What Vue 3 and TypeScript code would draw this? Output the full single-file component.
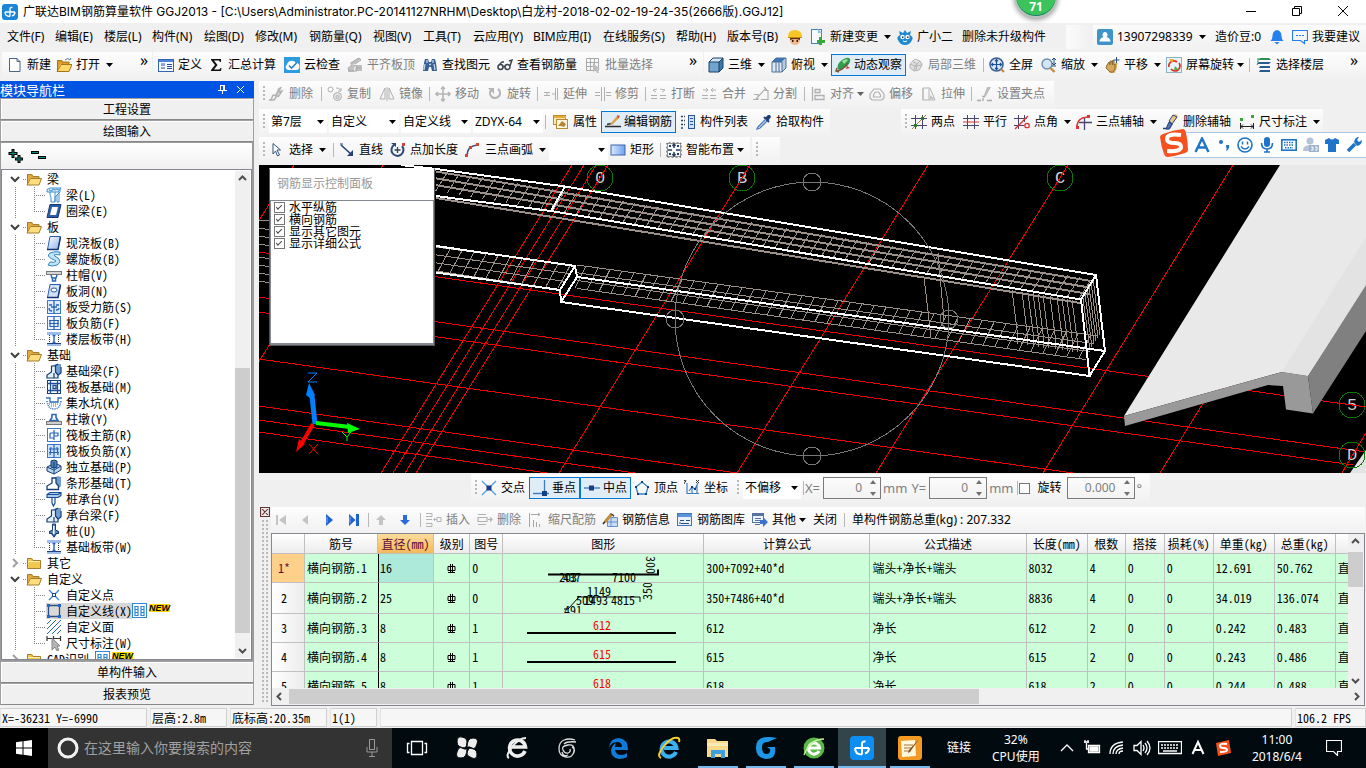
<script setup lang="ts">
import { h, ref, type FunctionalComponent } from 'vue'

interface Item {
  k?: 'sep' | 'grip' | 'combo' | 'more' | 'gap'
  t?: string
  i?: string
  w: number
  a?: 1 | 2
  d?: boolean
  on?: boolean
}

const G = '#a9a9a9'
const B = '#2563b8'
const N = '#1d3f7a'
const ln = (d: string, c: string, w = 1) => `<path d="${d}" fill="none" stroke="${c}" stroke-width="${w}"/>`
const fl = (d: string, c: string) => `<path d="${d}" fill="${c}"/>`
const grid = (x: number, y: number, w: number, hh: number, f: string, c: string) =>
  `<rect x="${x}" y="${y}" width="${w}" height="${hh}" fill="${f}" stroke="${c}"/>`

const icons: Record<string, string> = {
  logo: `<rect width="16" height="16" rx="3" fill="#1a86d9"/>` + ln('M3 8h10M8 12.5V5q0-2 2.5-1.5M3 8q0 4.5 5 4.5M13 8q0 3-3 4', '#fff', 1.3),
  file: fl('M3 1h7l3 3v11H3z', '#fff') + ln('M3 1.5h7l3 3v10H2.5v-13zM10 1.5v3h3', '#4a6486'),
  open: fl('M1 3h5l1 2h6v3H5l-3 6H1z', '#d99d2b') + fl('M1 14l3-7h12l-3 7z', '#ffd868') + ln('M1.5 14V3.5h4l1 1.5H13v2M1 14.5h12l3-7H5z', '#a8741b') + ln('M9 3q3-3 5 0l1-2', '#4a7d9e'),
  define: grid(.5, 2.5, 15, 12, '#f4f8ff', '#3764b0') + fl('M1 3h14v2H1z', '#4d82d6') + ln('M3 8h4M3 11h4M9 7.5h5M9 9.5h5M9 11.5h5', '#2a4f94') + ln('M3 6.5h4', '#8fb2e8'),
  sigma: fl('M3 2h10v3h-1l-1-1.5H6L9.5 8 6 12.5h5.5L12.5 11h1L13 14H3v-1l4-5-4-5z', '#111'),
  cloud: `<rect width="16" height="16" fill="#2d9be0"/>` + fl('M4 13a3 3 0 0 1-1-5.5A5 5 0 0 1 12 6a3.5 3.5 0 0 1 0 7z', '#fff') + ln('M5 8.5l2.5 2.5 5-5', '#2d7fc8', 1.6),
  level: fl('M1 12l3-3h4l-1 3v3H1zM9 8h6v6H8zM3 6l8-5 3 1-6 5-4 1z', '#c0c0c0') + ln('M1 11l4-3 5 1v5H2zM4 6l8-5 2 2-6 4M9 11h5', G),
  binoc: fl('M2 6l1-4h3l1 3h2l1-3h3l1 4 1 8h-5l-1-4H7l-1 4H1z', '#3a5f96') + ln('M3 7l-1 6M5 3v3M11 3v3M12 7l1 6M7 7.5h2', '#c3d5ec', 1.3),
  glasses: ln('M1 10a2.5 2.5 0 1 0 5 0a2.5 2.5 0 1 0-5 0M8 10a2.5 2.5 0 1 0 5 0a2.5 2.5 0 1 0-5 0M6 9.5h2M2 8l3-3h2M13 9l2-6-3 1', '#3b4550', 1.5),
  batch: ln('M1.5 1.5h12v12h-12zM1.5 5.5h12M1.5 9.5h8M5.5 1.5v12M9.5 1.5v8', G) + fl('M8 6l7 6h-3l2 4h-2l-1.5-3L8 15z', '#bdbdbd'),
  cube: fl('M1 5l4-4h10l-4 4z', '#cfe6f7') + fl('M1 5h10v10H1z', '#6ea6cf') + fl('M11 5l4-4v10l-4 4z', '#3e78a8') + ln('M1 5l4-4h10v10l-4 4H1zM1 5h10v10M11 5l4-4', '#1e3f60'),
  topview: fl('M1 5l4-4h10l-4 4z', '#3c78b8') + fl('M1 5h10v10H1z', '#dfe9f3') + fl('M11 5l4-4v10l-4 4z', '#b6cbe0') + ln('M1 5l4-4h10v10l-4 4H1zM1 5h10v10M5 5v10M8 5v10', '#4d7194'),
  orbit: fl('M3 12Q1 8 7 3q6-4 8-1 1 4-4 8-6 4-8 2z', '#2f9d4d') + ln('M1 14Q7 14 13 6M4 15l-3-1 1-3', '#7a5838', 1.5) + fl('M7 4q4-3 6-1l-4 4z', '#9be09d') + fl('M12 9l3 2-4 1z', '#d23b2a'),
  local: fl('M2 7l5-4 5 1 3 3-3 6-6 1-4-2z', '#e0e0e0') + ln('M2 7l5-5 5 2 2 4-3 5-5 1-4-3zM2 7l5 2 5-5M7 9l-1 5M7 9l7-1M4 4l5 3-1 7', '#b5b5b5'),
  full: `<circle cx="7.5" cy="7.5" r="6.5" fill="#d8e8f8" stroke="#3b5f8c" stroke-width="1.5"/>` + ln('M7.5 2.5v10M2.5 7.5h10M6 4l1.5-1.5L9 4M6 11l1.5 1.5L9 11M4 6L2.5 7.5 4 9M11 6l1.5 1.5L11 9', '#1d4f97', 1.2) + ln('M12 12l3 3', '#c58a3a', 2.2),
  zoom: `<circle cx="6" cy="7" r="5" fill="#d4e6f6" stroke="#6d8cab" stroke-width="1.4"/>` + ln('M9.5 11l4 4', '#c58a3a', 2.4) + ln('M13 1v6M11 3l2-2 2 2M11 9h4M11 6l2 2 2-2', '#1c4a84'),
  pan: fl('M3 8l2-3 1 3V4h1.5l1 4V3.5H10V8l2-3 1.5 1-1 6-2 4H6l-3-4z', '#d6a957') + ln('M3 8l2-3 1 3V4h1.5l1 4V3.5H10V8l1-1v5l-2 3H6l-4-4z', '#8a6a34') + ln('M12.5 0v6M9.5 3h6', '#28527f'),
  rotscr: grid(.5, .5, 15, 15, '#e6f4f7', '#8ab4c4') + ln('M3 10a5 5 0 0 1 8-5M13 6a5 5 0 0 1-8 6', '#d8342c', 1.7) + fl('M3 2h5l-2 4z', '#f6a829') + fl('M9 9l4 4H8z', '#5cad49'),
  floors: fl('M4 1h9l2 2H2z', '#2f8d56') + fl('M3 5h12l-2 2H1zM4 9h10v2H3zM4 13h10v2H3z', '#295b92') + ln('M2 1v5l-1 2', '#2f8d56'),
  erase: fl('M9 2l4-1-4 8-3 1z', '#c3c3c3') + ln('M0 14h4M4 9l4 1-3 4H2l2-5M12 1L7 9M10 6l3-1-4 6', '#b0b0b0', 1.4),
  copy: `<circle cx="3.5" cy="3.5" r="2.5" fill="none" stroke="#b0b0b0"/><circle cx="10.5" cy="10.5" r="4" fill="#e4e4e4" stroke="#b0b0b0"/><circle cx="10.5" cy="11" r="1.5" fill="none" stroke="#b0b0b0"/>` + ln('M9 2q3-1 5 3M14 2v3h-3', '#b0b0b0'),
  mirror: ln('M6 2v11H1zM10 2v11h5zM8 1v14', '#b0b0b0'),
  move: ln('M8 1v14M1 8h14M6 3l2-2 2 2M6 13l2 2 2-2M3 6L1 8l2 2M13 6l2 2-2 2', '#b5b5b5', 1.6),
  rot: ln('M4 4a5 5 0 1 0 7-1', '#b5b5b5', 2.2) + fl('M1 2h6v6z', '#b5b5b5'),
  extend: ln('M1 6.5h6M1 9.5h6M9 8h3M12.5 2v12M14.5 2v12M4 6v4', '#b0b0b0'),
  trim: ln('M6.5 1v14M9.5 1v14M0 6.5h5M0 9.5h5M11 6.5h5M11 9.5h5', '#b0b0b0'),
  brk: ln('M0 12.5h6M0 9.5h6M9 12.5h6M9 9.5h6M6 3L2 4l3 2M9 3l5 1-3 2', '#b0b0b0'),
  merge: ln('M0 12.5h6M0 9.5h6M8 12.5h6M8 9.5h6M1 4h5M4 2l2 2-2 2M14 4H9M11 2L9 4l2 2', '#b0b0b0'),
  split: ln('M0 13.5h5v-5h-4M8 13.5h7v-9h-3M3 13L13 2M11 1l3 3', '#b0b0b0', 1.2),
  align: ln('M2.5 1v14M5 3.5h5v3H5zM5 9.5h9v4H5z', '#b0b0b0', 1.3),
  offset: ln('M5 3h6l4 5v4l-2 2H3l-2-2V8zM6.5 6h3l2 3v2h-7V9z', '#b0b0b0', 1.2),
  stretch: ln('M2 2h7l5 12H2zM2 2v12M8 3v11', '#b5b5b5') + fl('M9 9l5 4h-5z', '#c4c4c4'),
  grips: fl('M10 1h4l-5 9-3 2z', '#bdbdbd') + ln('M0 14.5h4M10 14.5h5M5 10l3 1M6 12v3', '#a8a8a8', 1.3),
  prop: grid(.5, 1.5, 12, 9, '#fbe9b7', '#b98a31') + fl('M1 2h12v2H1z', '#e9ab37') + grid(3.5, 5.5, 11, 9, '#fff6dd', '#b98a31') + fl('M5 12l4-5 4 3-2 3-3-1z', '#b48738'),
  editbar: ln('M0 12.5h16M2 10.5l4-1', '#2d2d2d', 1.6) + fl('M5 10l7-8 2 2-7 7z', '#d8a24e') + fl('M12 1l3 1-2 3z', '#c44936'),
  list: ln('M1 2.5h2M1 6.5h2M1 10.5h2M1 14h2M4 2.5h1M4 6.5h1M4 10.5h1', '#345', 1.5) + grid(8.5, 1.5, 6, 13, '#cfe0f7', '#29549b') + ln('M10 4.5h3M10 7.5h3M10 10.5h3', '#29549b'),
  pick: fl('M9 4l3-3h2l1 2-3 4z', '#1f3d73') + ln('M8 3l5 5', '#1f3d73', 2) + ln('M10 5l-8 8-1 2 3-1 7-7', '#4c7cb8', 1.3),
  twop: ln('M4.5 1v14M11.5 1v14M0 4.5h16M0 11.5h16', '#46466e') + ln('M1 15L15 1', '#a5802e') + fl('M3 10h3v3H3zM10 3h3v3h-3z', '#2f7a2f'),
  para: ln('M4.5 1v14M11.5 1v14', '#46466e') + ln('M0 4.5h16M0 11.5h16', '#46466e') + ln('M0 8h16', '#d33'),
  pang: ln('M4.5 1v14M10.5 1v7M0 4.5h13M0 11.5h10', '#46466e') + ln('M1 15L14 2', '#d33', 1.3) + `<circle cx="13" cy="11.5" r="2.2" fill="none" stroke="#d33" stroke-width="1.3"/>`,
  parc: ln('M1 13q0-10 12-10', '#d33', 1.6) + ln('M8.5 4v12M3 8.5h13', '#46466e', 1.3) + fl('M11 1h3v3h-3zM0 12h3v3H0z', '#d33'),
  delax: ln('M0 14.5h7', '#28427c', 1.5) + fl('M10 1l3-1 2 2-5 7-3-2z', '#e6c77c') + fl('M7 7l3 3-3 5H3l2-5z', '#5572ad') + ln('M10 1l4 2-5 7-3-3zM6 8l3 2-3 5H3z', '#28427c'),
  dim: fl('M1 4h3v3H1zM12 1h3v3h-3z', '#3ba53b') + ln('M1.5 9v6M14.5 9v6M2 12.5h12M4 10.5l-2 2 2 2M12 10.5l2 2-2 2', '#222'),
  cursor: fl('M4 1l8 7H8.5l2 5-2 1-2-5L4 12z', '#fff') + ln('M4 1.5l7.5 6.5H8l2.5 5-2 1-2-5L4 12z', '#33527d'),
  line: ln('M2 3l11 10', '#24417a', 1.6) + fl('M14 8v6H8z', '#24417a') + ln('M1 2h3', '#24417a'),
  addlen: ln('M4 3a6 6 0 1 0 8 1', '#2c4877', 2) + ln('M7.5 5v6M4.5 8h6', '#345', 1.3) + fl('M1 1h5v4z', '#2c4877') + fl('M12 1h3v3h-3z', '#c44'),
  arc: ln('M2 14Q2 4 12 3', '#35507e', 1.6) + fl('M0 12h3v3H0zM4 4h3v3H4zM11 1h3v3h-3z', '#d2452f'),
  rect: `<defs><linearGradient id="rg"><stop stop-color="#dce9ff"/><stop offset="1" stop-color="#6fa0f0"/></linearGradient></defs><rect x="1" y="3" width="14" height="10" fill="url(#rg)" stroke="#3d63ae"/>`,
  smart: ln('M1 1h14v14H1z', '#333') + `<path d="M.5.5h15v15H.5z" fill="none" stroke="#fff" stroke-dasharray="2 2"/>` + ln('M8 2v4M8 10v4M2 8h4M10 8h4M6.5 4L8 2l1.5 2M6.5 12L8 14l1.5-2', '#24415f', 1.4) + fl('M3 3h2v2H3zM11 3h2v2h-2zM3 11h2v2H3zM11 11h2v2h-2z', '#24415f'),
  worker: fl('M3 8h10v4q-1 4-5 4t-5-4z', '#f0b98c') + fl('M1 8Q1 1 8 1t7 7l-2 1H3z', '#f6c626') + fl('M3 9h10v2q-5-2-10 0z', '#5c3415') + fl('M5 11h1.5v2H5zM9.5 11H11v2H9.5z', '#331a0a') + ln('M1 8.5h14', '#c08b13'),
  newchg: grid(1.5, .5, 10, 14, '#f5fbff', '#3b87bd') + fl('M8 0l4 4H8z', '#8cc2e6') + fl('M9 8h3v3h3v3h-3v2H9v-2H7v-3h2z', '#36a83a'),
  fairy: fl('M2 2l4 2 2-3 2 3 4-2-1 4q4 2 2 5-2 5-7 5t-7-5q-2-3 2-5z', '#1e88d2') + `<circle cx="5.5" cy="8" r="2.2" fill="#fff"/><circle cx="10.5" cy="8" r="2.2" fill="#fff"/>` + fl('M5 7.5h1.5V9H5zM10 7.5h1.5V9H10z', '#234') + ln('M6 12q2 1.5 4 0', '#fff'),
  user: `<rect width="16" height="16" rx="2" fill="#3e93c9"/>` + fl('M8 3a2.8 2.8 0 0 1 1.5 5q4 1 4 4.5h-11q0-3.5 4-4.5A2.8 2.8 0 0 1 8 3z', '#fff'),
  bell: fl('M8 1q4.5 1 4.5 6 0 3 2 5h-13q2-2 2-5 0-5 4.5-6zM5.5 13h5L8 15.5z', '#2680eb'),
  chat: ln('M.5 1.5h15v10h-3v3l-4-3h-8z', '#2680eb', 1.2) + fl('M4 6h2v1H4zM7 6h2v1H7zM10 6h2v1h-2z', '#2680eb'),
  cross: ln('M1 1l14 14M15 1L1 15', '#4da0df', 1.3) + fl('M5.5 5.5h5v5h-5z', '#153f86'),
  perp: ln('M0 13.5h16M11.5 0v15', '#3c7fc6', 1.3) + fl('M9 11h5v5H9z', '#153f86'),
  mid: ln('M0 8h16', '#3c7fc6', 1.4) + fl('M5 5.5h5v5H5z', '#153f86'),
  vertex: ln('M8 2l6 5-2 7H4L2 7z', '#3a80c4', 1.3) + fl('M7 1h2v2H7zM13 6h2v2h-2zM1 6h2v2H1zM3 13h2v2H3zM11 13h2v2h-2z', '#153f86'),
  coord: ln('M3 3v10.5h12M5 11l3-4 3 2 3-6M8 14V8M13 14V5', '#3c7fc6', 1.2) + ln('M0 0l2 2M2 0L0 4M12 0l3 3M15 0l-3 3', '#333') + fl('M7 6h2v2H7zM10 8h2v2h-2z', '#153f86'),
  first: fl('M1 3h2v10H1zM11 3v10L4 8z', '#c4c4c4'),
  prev: fl('M10 3v10L4 8z', '#c4c4c4'),
  next: fl('M4 2l7 6-7 6z', '#1e62d2') + ln('M5 5v6', '#7db0f5'),
  last: fl('M3 2l6.5 6L3 14zM10 2h3v12h-3z', '#1e62d2') + ln('M4 5v6', '#7db0f5'),
  up: fl('M8 3l5 5h-3v5H6V8H3z', '#c4c4c4'),
  down: fl('M6 3h4v5h3l-5 5-5-5h3z', '#2a6ce0'),
  ins: ln('M0 1.5h6v3H0M0 7.5h6M0 11.5h6v3H0M15 5.5v4h-4v-4zM8 7.5h3M9 6L7.5 7.5 9 9', '#b3b3b3'),
  rem: ln('M1 2.5h8M1 5.5h9v4H1zM1 12.5h8M11 7.5h4M13 5.5l2 2-2 2', '#b3b3b3', 1.2),
  scale: ln('M1.5 1v14M5.5 8v7M8.5 10v5M11.5 12v3M3 2.5h9M10 1l2 1.5L10 4', '#a8a8a8'),
  info: fl('M5 5h10v9H5z', '#c9dcf5') + ln('M5.5 5.5h10v9h-10zM9 6v8M5.5 10h10', '#6790c9') + ln('M1 12L9 2l3 2', '#3a2d20', 1.6) + fl('M2 9l6-7 3 1-7 8z', '#c78e3b'),
  lib: grid(.5, 1.5, 14, 12, '#e9f1fb', '#4175b8') + fl('M1 2h14v3H1z', '#5b93d8') + ln('M3 8.5h4M9 8.5h4M4 11.5h8M3 10v2', '#284b7d'),
  other: grid(.5, 1.5, 11, 9, '#eef3fb', '#5574a3') + fl('M1 2h11v2H1z', '#5574a3') + ln('M3 6.5h6M3 8.5h6M3 12.5h5', '#5574a3') + fl('M8 8h3V5l5 5-5 5v-3H8z', '#3b72cf'),
  // component tree
  fopen: fl('M1 3h5l1.5 2H13v3H5l-3 6H1z', '#e0a93a') + fl('M1 14l3-7h12l-3 7z', '#ffdd7a') + ln('M1.5 13.5V3.5h4l1.5 2h6v1.5M1 14h12l2.5-6.5h-11z', '#a57d33'),
  fclosed: fl('M1 3h5l1.5 2H15v9H1z', '#f3c650') + ln('M1.5 13.5V3.5h4l1.5 2h7.5v8z', '#a57d33') + ln('M2 6.5h12', '#fff0b0'),
  beam: fl('M1 3l3-2h11l-4 4H1z', '#d9edfa') + ln('M1 2.5l3-1.5h11l-3 4H1zM4 5v3l1 2v5h4v-5l3-3 2-2v-3M9 5v10M11 8v7h2V5M3 3l4 1M6 2l4 1M10 2l3 1', '#3f8fca'),
  ring: fl('M4 1h11l-3 14H1z', '#2c5ea8') + fl('M6 4h6l-2 8H4z', '#fff') + ln('M4 1.5h11L12 14.5H1z', '#16366f'),
  slab: `<defs><linearGradient id="sg" x2="1" y2="1"><stop stop-color="#fff"/><stop offset="1" stop-color="#8db2ea"/></linearGradient></defs><path d="M4 1.5h10.5L12 14.5H1.5z" fill="url(#sg)" stroke="#2c5ea8"/>` + ln('M1 14.5h11L14.5 2', '#16366f', 1.4),
  spiral: fl('M4 2q5-2 10-1v3q-4-1-6 0 0 1 4 3 4 4-1 7-5 2-9 0l2-3q5 1 6-1-1-1-4-2-6-3-2-6z', '#bfe4f8') + ln('M4 2q5-2 10-1v3q-4-1-6 0 0 1 4 3 4 4-1 7-5 2-9 0l2-3q5 1 6-1-1-1-4-2-6-3-2-6z', '#2f86c5'),
  cap: grid(.5, 4.5, 15, 3, '#d5d5d5', '#777') + ln('M5 8l1 3h4l1-3M6.5 11v3h3v-3', '#2c67bd', 1.5),
  hole: `<path d="M4 1.5h10.5L12 14.5H1.5z" fill="#cfe0f8" stroke="#2c5ea8"/><ellipse cx="8" cy="7" rx="3" ry="2" fill="#fff" stroke="#2c5ea8"/>` + ln('M1 14.5h11L14.5 2', '#16366f', 1.4),
  r1: grid(1.5, 1.5, 13, 13, '#dcebff', '#4076c9') + ln('M8 1v14M3 6h3M10 6h3M3 9q0 3 3 3M13 9q0 2-3 2M5 8h6', B, 1.3),
  r2: grid(1.5, 1.5, 13, 13, '#eef5ff', '#4076c9') + ln('M8 1v14M3 5.5h10M3 8.5h10M4 11.5h8M4 5v7M12 5v7', B, 1.2),
  band: fl('M1 1h14v3H1zM1 12h14v3H1z', '#9cbced') + ln('M1 12.5h14', N) + `<path d="M3.5 4v8M12.5 4v8" stroke="#333" stroke-dasharray="1 1"/>` + ln('M8 4v8M6.5 4.5h3M6.5 11.5h3', B, 1.4),
  fbeam: fl('M6 3l4-2h5v9l-4 4z', '#6f9fce') + fl('M5 3h4v6l3 3v3H1v-3l4-3z', '#e5f0fa') + ln('M5.5 3h4v6l2.5 3v3H1v-3l4.5-3zM9 3l3-2M12 12l3-2V4M8 10v5', '#173d75', 1.2),
  raft: grid(1.5, 1.5, 13, 13, '#fff', '#173d75') + ln('M4.5 1v14M11.5 1v14M1 4.5h14M1 11.5h14M7 6.5h3v3H7z', '#1c4f97', 1.3),
  pit: ln('M0 3h4v4h8V3h4', '#2f6db8', 1.3) + `<path d="M1 6q1 8 7 8t7-8" fill="none" stroke="#2f6db8" stroke-width="1.5" stroke-dasharray="1 1"/><path d="M3 9h10M5 11h6" stroke="#2f6db8" stroke-dasharray="1 1"/>`,
  pier: ln('M6 3.5h4v3l2 3H4l2-3z', '#2c67bd', 1.6) + grid(.5, 10.5, 15, 3, '#cfcfcf', '#777'),
  r3: grid(1.5, 1.5, 13, 13, '#fff', '#4076c9') + ln('M8 3v10M4 6h4v-1M8 9h4M4 6v5h4M12 9v-3H8', B, 1.2),
  r4: grid(1.5, 1.5, 13, 13, '#cfe3ff', '#4076c9') + ln('M8 1v14M3 6h10M3 9.5h10M5 4l-1 8M11 4l1 8', B, 1.2),
  iso: fl('M1 8l6-4 8 3v4l-7 4-7-3z', '#b9d5ee') + fl('M5 2l3-1 3 1v6L8 10 5 8z', '#4b80b8') + ln('M1 8l4-2M11 5l4 2v4l-7 4-7-3V8l7 3 7-4M8 11v4M5 2l3-1 3 1v6L8 9 5 8zM8 3v6', '#173d75'),
  strip: fl('M8 3l4-2 3 1v9l-3 3z', '#6f9fce') + fl('M6 3h4v5l2 3v3H1v-3l4-3z', '#fff') + ln('M6 3h4v5l2.5 3v3.5H1V11l5-3z', '#173d75', 1.3),
  pilecap: fl('M1 3l3-2h11v4l-3 2H1z', '#a9c9e8') + ln('M1 3.5l3-2h11v3l-3 2H1zM1 3.5h11l3-2M6 7v5l1.5 3L9 12V7', '#1c4f97', 1.2),
  pile: fl('M6 1h4v6l3 1v3h-2l-3 4-3-4H3V8l3-1z', '#5b87b5') + ln('M6.5 1h3v6l3 1.5v2H10l-2 3.5-2-3.5H3.5v-2l3-1.5z', '#173d75') + fl('M7 3h1.5v8H7z', '#fff'),
  xpt: ln('M3 3l10 10M13 3L3 13', '#3d86cf', 1.3) + fl('M6 6h4v4H6z', '#1a4690') + fl('M7 7h2v2H7z', '#fff'),
  polyl: ln('M2.5 2.5h11v11h-11z', '#2c4c84', 1.3) + fl('M1 1h3v3H1zM12 1h3v3h-3zM1 12h3v3H1zM12 12h3v3h-3z', '#2368c8'),
  hatch: ln('M1 5l4-4M1 10L10 1M1 15L15 1M6 15l9-9M11 15l4-4', '#2368c8'),
  dimt: ln('M1 1v5M14.5 1v5M1 3.5h13M7.5 1v5', '#333', 1.2) + fl('M6 3l8 8h-3l2 4-2 1-2-4-3 3z', '#b5b5b5') + ln('M6 3l8 8h-3l2 4-2 1-2-4-3 3z', '#8b8b8b'),
  gridb: grid(.5, .5, 14, 14, '#fff', '#2f87d6') + ln('M3 3.5h3v9H3zM9 3.5h3v9H9zM3 6.5h3M3 9.5h3M9 6.5h3M9 9.5h3', '#2f87d6', 1.2),
}

const Icon: FunctionalComponent<{ n: string }> = (p) => h('svg', { class: 'ico', viewBox: '0 0 16 16', 'aria-hidden': 'true', innerHTML: icons[p.n] })
Icon.props = ['n']

const caret = () => h('svg', { viewBox: '0 0 7 4', innerHTML: '<path d="M0 0h7L3.5 4z"/>' })

const Tools: FunctionalComponent<{ items: Item[] }> = (p) =>
  p.items.map((it) => {
    const style = { width: it.w + 'px' }
    if (it.k === 'gap') return h('span', { style })
    if (it.k === 'sep') return h('span', { class: 'sep', style })
    if (it.k === 'grip') return h('span', { class: 'grip', style })
    if (it.k === 'more') return h('button', { class: 'more', style, 'aria-label': '更多' }, '»')
    if (it.k === 'combo')
      return h('span', { class: 'combo', style }, [h('select', { 'aria-label': it.t || '选项' }, [h('option', it.t)]), caret()])
    return h('button', { class: ['tool', { off: it.d, on: it.on }], style, disabled: it.d }, [
      it.i ? h(Icon, { n: it.i }) : null,
      it.t ? h('span', it.t) : null,
      it.a ? h('i', { class: it.a === 2 ? 'car tight' : 'car' }, [caret()]) : null,
    ])
  })
Tools.props = ['items']

const menus: [string, number][] = [['文件(F)', 48], ['编辑(E)', 49], ['楼层(L)', 48], ['构件(N)', 52], ['绘图(D)', 51], ['修改(M)', 54], ['钢筋量(Q)', 64], ['视图(V)', 50], ['工具(T)', 50], ['云应用(Y)', 60], ['BIM应用(I)', 70], ['在线服务(S)', 73], ['帮助(H)', 51], ['版本号(B)', 60]]
const menuItems: Item[] = [...menus.map(([t, w]) => ({ t, w })), { i: 'worker', w: 23 }, { t: '新建变更', i: 'newchg', w: 87, a: 1 }, { t: '广小二', i: 'fairy', w: 65 }, { t: '删除未升级构件', w: 104 }]
const account: Item[] = [{ t: '13907298339', i: 'user', w: 118, a: 1 }, { t: '造价豆:0', w: 54 }, { i: 'bell', w: 23 }, { t: '我要建议', i: 'chat', w: 74 }]

const topA: Item[] = [{ t: '新建', i: 'file', w: 49 }, { t: '打开', i: 'open', w: 84, a: 1 }, { k: 'more', w: 12 }]
const topB: Item[] = [{ t: '定义', i: 'define', w: 50 }, { t: '汇总计算', i: 'sigma', w: 76 }, { t: '云检查', i: 'cloud', w: 63 }, { t: '平齐板顶', i: 'level', w: 75, d: true }, { t: '查找图元', i: 'binoc', w: 75 }, { t: '查看钢筋量', i: 'glasses', w: 88 }, { t: '批量选择', i: 'batch', w: 104, d: true }, { k: 'more', w: 14 }]
const topC: Item[] = [{ t: '三维', i: 'cube', w: 63, a: 1 }, { t: '俯视', i: 'topview', w: 60, a: 1 }, { t: '动态观察', i: 'orbit', w: 75, on: true }, { k: 'gap', w: 3 }, { t: '局部三维', i: 'local', w: 75, d: true }, { k: 'sep', w: 6 }, { t: '全屏', i: 'full', w: 52 }, { t: '缩放', i: 'zoom', w: 63, a: 1 }, { t: '平移', i: 'pan', w: 62, a: 1 }, { t: '屏幕旋转', i: 'rotscr', w: 83, a: 2 }, { k: 'sep', w: 7 }, { t: '选择楼层', i: 'floors', w: 94 }, { k: 'more', w: 12 }]

const edit: Item[] = [{ k: 'grip', w: 6 }, { t: '删除', i: 'erase', w: 52, d: true }, { k: 'sep', w: 6 }, { t: '复制', i: 'copy', w: 52, d: true }, { t: '镜像', i: 'mirror', w: 50, d: true }, { k: 'sep', w: 6 }, { t: '移动', i: 'move', w: 52, d: true }, { t: '旋转', i: 'rot', w: 50, d: true }, { k: 'sep', w: 6 }, { t: '延伸', i: 'extend', w: 52, d: true }, { t: '修剪', i: 'trim', w: 50, d: true }, { k: 'sep', w: 6 }, { t: '打断', i: 'brk', w: 51, d: true }, { t: '合并', i: 'merge', w: 51, d: true }, { t: '分割', i: 'split', w: 51, d: true }, { k: 'sep', w: 6 }, { t: '对齐', i: 'align', w: 59, a: 2, d: true }, { t: '偏移', i: 'offset', w: 52, d: true }, { t: '拉伸', i: 'stretch', w: 50, d: true }, { k: 'sep', w: 6 }, { t: '设置夹点', i: 'grips', w: 73, d: true }]
const pickA: Item[] = [{ k: 'grip', w: 6 }, { k: 'combo', t: '第7层', w: 60 }, { k: 'combo', t: '自定义', w: 72 }, { k: 'combo', t: '自定义线', w: 72 }, { k: 'combo', t: 'ZDYX-64', w: 72 }, { k: 'sep', w: 8 }, { t: '属性', i: 'prop', w: 48 }, { t: '编辑钢筋', i: 'editbar', w: 75, on: true }, { k: 'gap', w: 4 }, { t: '构件列表', i: 'list', w: 76 }, { t: '拾取构件', i: 'pick', w: 70 }]
const pickB: Item[] = [{ k: 'grip', w: 6 }, { t: '两点', i: 'twop', w: 52 }, { t: '平行', i: 'para', w: 51 }, { t: '点角', i: 'pang', w: 62, a: 1 }, { t: '三点辅轴', i: 'parc', w: 87, a: 1 }, { t: '删除辅轴', i: 'delax', w: 76 }, { t: '尺寸标注', i: 'dim', w: 80, a: 1 }]
const draw: Item[] = [{ k: 'grip', w: 6 }, { t: '选择', i: 'cursor', w: 64, a: 1 }, { k: 'sep', w: 6 }, { t: '直线', i: 'line', w: 51 }, { t: '点加长度', i: 'addlen', w: 75 }, { t: '三点画弧', i: 'arc', w: 84, a: 1 }, { k: 'combo', t: '', w: 61 }, { t: '矩形', i: 'rect', w: 50 }, { k: 'sep', w: 6 }, { t: '智能布置', i: 'smart', w: 80, a: 2 }]

const snap: Item[] = [{ k: 'grip', w: 6 }, { t: '交点', i: 'cross', w: 48 }, { t: '垂点', i: 'perp', w: 51, on: true }, { t: '中点', i: 'mid', w: 51, on: true }, { k: 'gap', w: 3 }, { t: '顶点', i: 'vertex', w: 50 }, { t: '坐标', i: 'coord', w: 46 }]
const dockA: Item[] = [{ i: 'first', w: 23 }, { i: 'prev', w: 24 }, { i: 'next', w: 24 }, { i: 'last', w: 22 }, { k: 'sep', w: 5 }, { i: 'up', w: 24 }, { i: 'down', w: 23 }, { k: 'sep', w: 6 }, { t: '插入', i: 'ins', w: 51, d: true }, { t: '删除', i: 'rem', w: 51, d: true }, { t: '缩尺配筋', i: 'scale', w: 74, d: true }, { t: '钢筋信息', i: 'info', w: 75 }, { t: '钢筋图库', i: 'lib', w: 75 }, { t: '其他', i: 'other', w: 61, a: 2 }, { t: '关闭', w: 31 }, { k: 'sep', w: 8 }]

type Leaf = [string, string]
interface Group { name: string; open: boolean; kids: Leaf[] }
const tree: Group[] = [
  { name: '梁', open: true, kids: [['梁(L)', 'beam'], ['圈梁(E)', 'ring']] },
  { name: '板', open: true, kids: [['现浇板(B)', 'slab'], ['螺旋板(B)', 'spiral'], ['柱帽(V)', 'cap'], ['板洞(N)', 'hole'], ['板受力筋(S)', 'r1'], ['板负筋(F)', 'r2'], ['楼层板带(H)', 'band']] },
  { name: '基础', open: true, kids: [['基础梁(F)', 'fbeam'], ['筏板基础(M)', 'raft'], ['集水坑(K)', 'pit'], ['柱墩(Y)', 'pier'], ['筏板主筋(R)', 'r3'], ['筏板负筋(X)', 'r4'], ['独立基础(P)', 'iso'], ['条形基础(T)', 'strip'], ['桩承台(V)', 'pilecap'], ['承台梁(F)', 'fbeam'], ['桩(U)', 'pile'], ['基础板带(W)', 'band']] },
  { name: '其它', open: false, kids: [] },
  { name: '自定义', open: true, kids: [['自定义点', 'xpt'], ['自定义线(X)', 'polyl'], ['自定义面', 'hatch'], ['尺寸标注(W)', 'dimt']] },
  { name: 'CAD识别', open: false, kids: [] },
]

const checks = ref([
  { t: '水平纵筋', v: true },
  { t: '横向钢筋', v: true },
  { t: '显示其它图元', v: true },
  { t: '显示详细公式', v: true },
])

// straight edges of the two beams, as functions of x
const topEdge = (x: number) => 186.3 + (x - 564.7) * 0.1675
const botEdge = (x: number) => 211 + (x - 550.7) * 0.1667
const lowTop = (x: number) => 265 + (x - 577) * 0.138
const lowBot = (x: number) => 288.5 + (x - 577) * 0.1385
const leftTop = (x: number) => 247 + (x - 436) * 0.14
const leftBot = (x: number) => 271 + (x - 436) * 0.14

const f = (n: number) => n.toFixed(1)
const ties: string[] = []
for (let x = 436; x < 1092; x += 11.7) {
  const y = topEdge(x) + 5
  const yb = botEdge(x - 11) - 1
  ties.push(`M${f(x)} ${f(y)}L${f(x - 12)} ${f(yb)}`)
}
for (let x = 586; x < 1096; x += 12) {
  ties.push(`M${f(x)} ${f(lowTop(x))}L${f(x - 11)} ${f(lowBot(x - 11))}`)
}
for (let x = 450; x < 578; x += 12) {
  ties.push(`M${f(x)} ${f(leftTop(x))}L${f(x - 12)} ${f(leftBot(x - 12))}`)
}
for (const x of [1012, 1022, 1028, 1033, 1038, 1043, 1050, 1057, 1062, 1067, 1072]) {
  ties.push(`M${x} ${f(botEdge(x) + 2)}L${x + 5} ${f(lowTop(x) + 5)}V${f(lowTop(x) + 19)}`)
}
for (let k = 0; k < 6; k++) {
  ties.push(`M${1083 + k * 2} ${298 - k * 4}L${1090 + k * 2} ${350 - k * 3}`)
}
const tiePath = ties.join('')
const bars = [0.25, 0.5, 0.75]
  .map((k) => {
    const y = (x: number) => f(topEdge(x) + (botEdge(x) - topEdge(x)) * k)
    return `M436 ${y(436)}L1090 ${y(1090)}`
  })
  .join('') + `M436 198L1080 303`
const thin = [0, 0.33, 0.66, 1]
  .map((k) => {
    const y = (x: number) => f(lowTop(x) + (lowBot(x) - lowTop(x)) * k)
    const z = (x: number) => f(leftTop(x) + (leftBot(x) - leftTop(x)) * k)
    return `M577 ${y(577)}L${f(1097 - k * 11)} ${y(1090)}M436 ${z(436)}L${f(575 - k * 14)} ${z(570)}`
  })
  .join('')
const axes = 'M572 165L381 473M584 165L393 473M596 165L405 473M608 165L416 473M750 165L559 473M928 165L737 473M1068 165L876 473M1233 165L1043 473M1350 165L1160 473M1366 433L1342 473M383 165L258 363M294 165L258 222M259 252L1366 407M259 297L1366 452M259 312L1353 465M259 359L1073 473M259 406L737 473M259 420L635 473M259 432L547 473'
const bubbles: [number, number, string][] = [[600, 178, '0'], [742, 178, 'B'], [1060, 178, 'C'], [1352, 405, '5'], [1352, 455, 'D']]

const cols: [string, number][] = [['', 33], ['筋号', 73], ['直径(mm)', 56], ['级别', 36], ['图号', 33], ['图形', 201], ['计算公式', 166], ['公式描述', 156], ['长度(mm)', 61], ['根数', 38], ['搭接', 39], ['损耗(%)', 49], ['单重(kg)', 61], ['总重(kg)', 61], ['', 60]]
const rows = [
  { n: '1*', d: '16', g: '0', f: '300+7092+40*d', s: '端头+净长+端头', l: '8032', c: '4', u: '12.691', w: '50.762' },
  { n: '2', d: '25', g: '0', f: '350+7486+40*d', s: '端头+净长+端头', l: '8836', c: '4', u: '34.019', w: '136.074' },
  { n: '3', d: '8', g: '1', f: '612', s: '净长', l: '612', c: '2', u: '0.242', w: '0.483' },
  { n: '4', d: '8', g: '1', f: '615', s: '净长', l: '615', c: '2', u: '0.243', w: '0.486' },
  { n: '5', d: '8', g: '1', f: '618', s: '净长', l: '618', c: '2', u: '0.244', w: '0.488' },
]
</script>

<template>
  <div class="screen">
    <header class="title">
      <Icon n="logo" />
      <h1>广联达BIM钢筋算量软件 GGJ2013 - [C:\Users\Administrator.PC-20141127NRHM\Desktop\白龙村-2018-02-02-19-24-35(2666版).GGJ12]</h1>
      <div class="winbtns">
        <button aria-label="最小化"><svg viewBox="0 0 10 10"><path d="M0 5.5h10" /></svg></button>
        <button aria-label="还原"><svg viewBox="0 0 10 10"><path d="M.5 2.5h7v7h-7zM2.5 2.5v-2h7v7h-2" /></svg></button>
        <button aria-label="关闭"><svg viewBox="0 0 10 10"><path d="M0 0l10 10M10 0L0 10" /></svg></button>
      </div>
      <div class="score">71</div>
    </header>

    <nav class="menu">
      <Tools :items="menuItems" />
      <span class="blank"></span>
      <span class="account"><Tools :items="account" /></span>
    </nav>

    <div class="bar main-bar">
      <div class="grp"><Tools :items="topA" /></div>
      <div class="grp"><Tools :items="topB" /></div>
      <div class="grp grow"><Tools :items="topC" /></div>
    </div>

    <div class="body">
      <aside class="side">
        <div class="side-head song">
          <span>模块导航栏</span>
          <button aria-label="固定"><svg viewBox="0 0 9 9"><path d="M2 .5h5M2.5 0v5M5.5 0v5M6.5 0v5M0 5.5h9M4.5 6v3" /></svg></button>
          <button aria-label="关闭"><svg viewBox="0 0 9 9"><path d="M1 1l7 7M8 1L1 8" /></svg></button>
        </div>
        <button class="tab song">工程设置</button>
        <button class="tab song">绘图输入</button>
        <div class="panel">
          <div class="expand">
            <svg viewBox="0 0 40 16" aria-hidden="true"><path d="M6 1v9M1.5 5.5h9M12 7v8M8 11h8M24 4.5h8M31 9.5h8" stroke="#000" stroke-width="3" fill="none" /><path d="M6 2v7M2.5 5.5h7M12 8v6M9 11h6M25 4.5h6M32 9.5h6" stroke="#0c8a80" stroke-width="1" fill="none" /></svg>
          </div>
          <div class="treebox">
            <ul class="tree song">
              <template v-for="(g, gi) in tree" :key="g.name">
                <li class="branch">
                  <svg class="twist" viewBox="0 0 23 16" aria-hidden="true">
                    <path v-if="g.open" d="M8 6l4 4 4-4" stroke="#404040" stroke-width="2" fill="none" />
                    <path v-else d="M10 4l4 4-4 4" stroke="#a0a0a0" stroke-width="2" fill="none" />
                    <path d="M20 8.5h3" stroke="#888" stroke-dasharray="1 1" />
                  </svg>
                  <Icon :n="g.open ? 'fopen' : 'fclosed'" /><span>{{ g.name }}</span>
                  <template v-if="gi === 5"><Icon n="gridb" /><b class="new">NEW</b></template>
                </li>
                <li v-for="(k, ki) in g.kids" :key="k[0]" class="leaf" :class="{ sel: k[0] === '自定义线(X)' }">
                  <svg class="lines" viewBox="0 0 43 16" aria-hidden="true">
                    <path d="M12.5 0v16M31 8.5h12" />
                    <path :d="ki === g.kids.length - 1 ? 'M31.5 0v9' : 'M31.5 0v16'" />
                  </svg>
                  <span class="hit"><Icon :n="k[1]" /><span>{{ k[0] }}</span></span>
                  <template v-if="k[0] === '自定义线(X)'"><Icon n="gridb" /><b class="new">NEW</b></template>
                </li>
              </template>
            </ul>
            <div class="vbar">
              <svg viewBox="0 0 15 15"><path d="M4 9l3.5-3.5L11 9" /></svg>
              <span class="track"><span class="thumb"></span></span>
              <svg viewBox="0 0 15 15"><path d="M4 6l3.5 3.5L11 6" /></svg>
            </div>
          </div>
        </div>
        <button class="tab song">单构件输入</button>
        <button class="tab song">报表预览</button>
      </aside>

      <main class="work">
        <div class="bar"><div class="grp"><Tools :items="edit" /></div></div>
        <div class="bar split">
          <div class="grp"><Tools :items="pickA" /></div>
          <div class="grp"><Tools :items="pickB" /></div>
        </div>
        <div class="bar">
          <div class="grp"><Tools :items="draw" /></div>
          <div class="grp stub"><span class="grip"></span></div>
        </div>

        <section class="view">
          <svg class="scene" viewBox="259 165 1107 308" preserveAspectRatio="xMinYMin slice">
            <rect x="259" y="165" width="1107" height="308" fill="#000" />
            <g fill="none" shape-rendering="crispEdges">
              <path :d="axes" stroke="#f00000" />
              <path :d="tiePath" stroke="#9c908a" />
              <path :d="thin" stroke="#9c908a" />
              <path :d="bars" stroke="#9c908a" stroke-width="2" />
              <path d="M259 220l12 1M259 228l12 2M259 236l12 2M259 244l12 2M259 257l12 2M259 265l12 2M259 273l12 2M259 281l12 2M924 277l7 60M938 253l6 67" stroke="#9c908a" />
              <path d="M401 165L436 169L565 186.5L1096 275L1105 351L577 277L575 266L436 246M436 196L551 211L1081 299.5L1089.5 376L561 302L560 290L436 272.5M565 186.5L551 211M1096 275L1081 299.5M1105 351L1089.5 376M575 266L560 290M577 277L561 302" stroke="#fff" stroke-width="2" />
              <g stroke="#777">
                <circle cx="812" cy="319" r="137" /><circle cx="812" cy="182" r="9" /><circle cx="812" cy="456" r="9" /><circle cx="675" cy="319" r="9" /><circle cx="949" cy="319" r="9" />
              </g>
            </g>
            <path d="M1280 165H1366V288L1308 376L1282 372L1124 416Z" fill="#e9e9e9" />
            <path d="M1366 237L1282 372L1308 376L1366 286Z" fill="#e3e3e3" />
            <path d="M1366 285L1308 376L1313 413.5L1366 331Z" fill="#808080" />
            <path d="M1124 416L1282 372L1308 376L1313 413.5L1286 409.5L1283 386L1268 385L1125 426Z" fill="#999" />
            <path d="M1366 450L1350 473H1366Z" fill="#e3e3e3" />
            <g v-for="b in bubbles" :key="b[2]">
              <circle :cx="b[0]" :cy="b[1]" r="13" fill="none" stroke="#087a08" shape-rendering="crispEdges" />
              <text :x="b[0]" :y="b[1] + 5" class="axis-name">{{ b[2] }}</text>
            </g>
            <path d="M608 165l-16 26M750 165l-16 26M1068 165l-16 26M1339 403l27 4M1366 433l-22 36" stroke="#f00000" shape-rendering="crispEdges" />
            <path d="M312 396l3 28" stroke="#0080ff" stroke-width="5" /><path d="M309 383l6 12-4 4-5-4z" fill="#0080ff" />
            <path d="M316 423l34 4" stroke="#0f0" stroke-width="4" /><path d="M347 423l13 6-12 4z" fill="#0f0" />
            <path d="M313 424l-11 19" stroke="#f00" stroke-width="4" /><path d="M299 439l6 5-9 8z" fill="#f00" />
            <path d="M308 373h9l-9 9h9" stroke="#0080ff" fill="none" /><path d="M342 432l5 5 4-5M347 437v4" stroke="#0f0" fill="none" /><path d="M309 444l9 10M318 444l-9 10" stroke="#f00" fill="none" />
          </svg>
          <div class="dialog">
            <h2>钢筋显示控制面板</h2>
            <div class="opts song">
              <label v-for="c in checks" :key="c.t"><input v-model="c.v" type="checkbox" />{{ c.t }}</label>
            </div>
          </div>
        </section>

        <div class="bar snap">
          <div class="grp"><Tools :items="snap" /></div>
          <div class="grp fields">
            <span class="grip"></span>
            <span class="combo offset"><select aria-label="偏移方式"><option>不偏移</option></select><svg viewBox="0 0 7 4"><path d="M0 0h7L3.5 4z" /></svg></span>
            <span class="sep"></span>
            <label for="ox">X=</label>
            <span class="spin"><input id="ox" value="0" /><svg viewBox="0 0 6 16"><path d="M0 4h6L3 0zM0 12h6l-3 4z" /></svg></span>
            <span class="unit">mm</span>
            <label for="oy">Y=</label>
            <span class="spin"><input id="oy" value="0" /><svg viewBox="0 0 6 16"><path d="M0 4h6L3 0zM0 12h6l-3 4z" /></svg></span>
            <span class="unit">mm</span>
            <span class="sep"></span>
            <label class="turn"><input type="checkbox" />旋转</label>
            <span class="spin wide"><input value="0.000" aria-label="旋转角度" /><svg viewBox="0 0 6 16"><path d="M0 4h6L3 0zM0 12h6l-3 4z" /></svg></span>
            <span class="unit">°</span>
          </div>
        </div>

        <section class="dock">
          <div class="dock-grip"><button aria-label="关闭面板"><svg viewBox="0 0 9 9"><path d="M.5 .5h8v8h-8zM2 2l5 5M7 2L2 7" /></svg></button><span></span></div>
          <div class="dock-main">
            <div class="bar dock-bar">
              <Tools :items="dockA" />
              <span class="total">单构件钢筋总重(kg) : 207.332</span>
            </div>
            <div class="sheet">
              <div class="clip">
                <table class="song">
                  <colgroup><col v-for="(c, i) in cols" :key="i" :style="{ width: c[1] + 'px' }" /></colgroup>
                  <thead><tr><th v-for="(c, i) in cols" :key="i" :class="{ hot: i === 2 }">{{ c[0] }}</th></tr></thead>
                  <tbody>
                    <tr v-for="(r, ri) in rows" :key="r.n" :class="{ cur: ri === 0, tall: ri === 1 }">
                      <th>{{ r.n }}</th>
                      <td>横向钢筋.{{ ri + 1 }}</td>
                      <td class="dia">{{ r.d }}</td>
                      <td class="grade"><svg viewBox="0 0 9 9" role="img" aria-label="HRB400"><path d="M3.5 0v9M5.5 0v9M1 2.5h7v4H1zM1 8.5h7" /></svg></td>
                      <td>{{ r.g }}</td>
                      <td class="shape">
                        <svg v-if="ri === 0" viewBox="0 0 200 28">
                          <path d="M45 20.5h110v-5" stroke-width="2" /><text x="56" y="28">203</text><text x="60" y="28">437</text><text x="109" y="28">7100</text><text transform="translate(143 2) rotate(90)">300</text>
                        </svg>
                        <svg v-else-if="ri === 1" viewBox="0 0 200 30">
                          <path d="M65 26l11-12h61v5M61 26h4" /><text x="84" y="13">1149</text><text x="73" y="22">509</text><text x="81" y="22">1493</text><text x="108" y="22">4815</text><text x="61" y="32">491</text><text transform="translate(149 17) rotate(-90)">350</text>
                        </svg>
                        <svg v-else viewBox="0 0 200 28"><path d="M24 19h149" stroke-width="2" /><text x="90" y="16" class="len">{{ r.l }}</text></svg>
                      </td>
                      <td>{{ r.f }}</td><td>{{ r.s }}</td><td>{{ r.l }}</td><td>{{ r.c }}</td><td>0</td><td>0</td><td>{{ r.u }}</td><td>{{ r.w }}</td><td class="tail">直螺纹</td>
                    </tr>
                  </tbody>
                </table>
              </div>
              <div class="vbar">
                <svg viewBox="0 0 15 15"><path d="M4 9l3.5-3.5L11 9" /></svg>
                <span class="track"><span class="thumb"></span></span>
                <svg viewBox="0 0 15 15"><path d="M4 6l3.5 3.5L11 6" /></svg>
              </div>
              <div class="hbar">
                <svg viewBox="0 0 15 15"><path d="M9 4L5.5 7.5 9 11" /></svg>
                <span class="track"><span class="thumb"></span></span>
                <svg viewBox="0 0 15 15"><path d="M6 4l3.5 3.5L6 11" /></svg>
              </div>
            </div>
          </div>
        </section>
      </main>

      <div class="ime">
        <svg class="sogou" viewBox="0 0 28 28"><path d="M3 5q10-4 20-5 2 0 3 4 2 8 2 17 0 2-3 3-9 3-17 4-3 0-4-3Q1 17 0 8q0-2 3-3z" fill="#f4511e" /><path d="M21 6Q7 4 7 10q0 4 8 4 6 0 6 4 0 5-14 4" fill="none" stroke="#fff" stroke-width="4" /></svg>
        <svg viewBox="0 0 16 16"><path d="M1.5 15L8 1.5 14.5 15M4 10.5h8" fill="none" stroke="#1d74c8" stroke-width="2.4" /></svg>
        <svg viewBox="0 0 16 16"><circle cx="5" cy="5" r="2" fill="#1d74c8" /><path d="M10 8h3q1 4-3 6 1-2 0-6z" fill="#1d74c8" /></svg>
        <svg viewBox="0 0 16 16"><circle cx="8" cy="8" r="7" fill="none" stroke="#1d74c8" stroke-width="1.6" /><path d="M5.5 4.5v3M10.5 4.5v3M4 9.5q4 5 8 0" fill="none" stroke="#1d74c8" stroke-width="1.5" /></svg>
        <svg viewBox="0 0 16 16"><rect x="5" width="6" height="10" rx="3" fill="#1d74c8" /><path d="M2.5 6q0 6 5.5 6t5.5-6M8 12v3M5 15h6" fill="none" stroke="#1d74c8" stroke-width="1.6" /></svg>
        <svg viewBox="0 0 16 16"><rect x=".8" y="2.8" width="14.4" height="10.4" fill="#fff" stroke="#1d74c8" stroke-width="1.6" /><path d="M3 5.5h10M3 8h10M4 10.7h8" stroke="#1d74c8" stroke-width="1.5" stroke-dasharray="1.5 1" /></svg>
        <svg viewBox="0 0 16 16"><circle cx="7" cy="4" r="3.5" fill="#b4c3d8" /><path d="M0 14q0-6 7-6v6z" fill="#b4c3d8" /><rect x="6" y="8" width="10" height="7" fill="#9eb2cb" /><path d="M8 10h2v3H8M12 10h2v3h-2" stroke="#fff" fill="none" /></svg>
        <svg viewBox="0 0 16 16"><path d="M1 3l4-2q3 3 6 0l4 2v4h-3v8H4V7H1z" fill="#1d74c8" /></svg>
        <svg viewBox="0 0 16 16"><path d="M2 14l7-7" stroke="#1d74c8" stroke-width="3.5" /><path d="M8 5q1-5 5-5l-2 3 2 2 3-2q0 5-5 6z" fill="#1d74c8" /></svg>
      </div>
    </div>

    <footer class="status song">
      <span class="s1">X=-36231 Y=-6990</span><span class="s2">层高:2.8m</span><span class="s3">底标高:20.35m</span><span class="s4">1(1)</span><span class="s5"></span><span class="s6">106.2 FPS</span>
    </footer>

    <div class="taskbar">
      <button class="start" aria-label="开始"><svg viewBox="0 0 16 16"><path d="M0 2.3l6.5-1v6.2H0zM7.5 1.2L16 0v7.5H7.5zM0 8.5h6.5v6.2L0 13.7zM7.5 8.5H16V16l-8.5-1.2z" fill="#fff" /></svg></button>
      <label class="search">
        <svg viewBox="0 0 22 22"><circle cx="11" cy="11" r="9" fill="none" stroke="#f2f2f2" stroke-width="3" /></svg>
        <input placeholder="在这里输入你要搜索的内容" aria-label="搜索" />
        <svg class="mic" viewBox="0 0 12 18"><path d="M3.5 .5h5v10h-5zM1 8v5h10V8M6 13v4M3 17.5h6" fill="none" stroke="#999" /></svg>
      </label>
      <div class="apps">
        <button aria-label="任务视图"><svg viewBox="0 0 24 24"><path d="M6.5 5.5h11v13h-11zM4.5 7.5h-2v9h2M19.5 7.5h2v9h-2" fill="none" stroke="#fff" stroke-width="1.3" /></svg></button>
        <button aria-label="风车"><svg viewBox="0 0 24 24"><path d="M11.5 12Q2 12 2 6t5-5 5 5-2 6zM12 11.5Q12 2 18 2t4 6-5 4-5-.5zM12.5 12Q22 12 22 18t-5 4-5-4 2-6zM12 12.5Q12 22 6 22t-4-6 5-4 5 .5z" fill="#eee" stroke="#010b0f" stroke-width="1" /></svg></button>
        <button aria-label="浏览器"><svg viewBox="0 0 24 24"><path d="M20 15a8 8 0 1 1 .5-4H7" fill="none" stroke="#eee" stroke-width="3.6" /><path d="M4 22Q0 20 7 11T21 2" fill="none" stroke="#eee" stroke-width="2" /></svg></button>
        <button aria-label="旋风"><svg viewBox="0 0 24 24"><path d="M20 4Q14 2 9 4T4 13t7 8 8-6-6-6-5 5 5 3 2-4M21 6q-9-1-12 2M7 16q1 5 6 3M17 11q5 3 0 8" fill="none" stroke="#ddd" stroke-width="1.3" /></svg></button>
        <button class="wide" aria-label="Edge"><svg viewBox="0 0 24 24"><path d="M3 12Q4 2 13 2q9 1 9 12H9q1 5 6 5 4 0 6-2v4q-3 2-8 2-8-1-8-9 1-5 5-7-1 2-1 4h7q0-5-5-5-6 0-8 6z" fill="#0f7ad8" /></svg></button>
        <button aria-label="Internet Explorer"><svg viewBox="0 0 24 24"><path d="M19 16a7.5 7.5 0 1 1 .5-4H7" fill="none" stroke="#3bb0f0" stroke-width="4" /><path d="M4 22Q-1 20 7 10T21 2q2 1 1 4" fill="none" stroke="#f7cf2d" stroke-width="2" /></svg></button>
        <button class="run" aria-label="文件资源管理器"><svg viewBox="0 0 24 24"><path d="M1 3h8l2 2h11v16H1z" fill="#f6d98b" /><path d="M1 7h21v3H1z" fill="#fbe9b5" /><path d="M5 22v-8h14v8h-4v-4H9v4z" fill="#3aa0de" /></svg></button>
        <button class="run" aria-label="广联达"><svg viewBox="0 0 24 24"><path d="M23 2Q18 4 14 6 8 5 8 12q0 6 5 6 4-1 3-5l-3-2h8q2 12-9 12Q2 22 2 12 2 1 14 1q5 0 9 1z" fill="#1d96e8" /></svg></button>
        <button class="run" aria-label="安全浏览器"><svg viewBox="0 0 24 24"><circle cx="12" cy="12" r="10.5" fill="#59b947" /><path d="M17 15a5.5 5.5 0 1 1 .5-3H8" fill="none" stroke="#fff" stroke-width="3" /><path d="M2 19Q8 3 22 3" fill="none" stroke="#c9f09c" stroke-width="1.3" /></svg></button>
        <button class="run live" aria-label="广联达钢筋算量"><svg viewBox="0 0 24 24"><rect width="24" height="24" rx="4" fill="#0d8ef2" /><path d="M5 12h14M12 18.500V8q0-3 3.500-2.500M5 12q0 6.500 7 6.500M19 12q0 4-4 5.500" fill="none" stroke="#fff" stroke-width="2" /></svg></button>
        <button class="run" aria-label="便签"><svg viewBox="0 0 24 24"><rect width="24" height="24" rx="3" fill="#f29a24" /><path d="M3 5l14-1 1 16-14 1z" fill="#fff8dc" /><path d="M6 9h9M6 12h8M6 15h5" stroke="#a87235" /><path d="M21 3l-9 13-2 1 1-3z" fill="#8d4a18" /></svg></button>
      </div>
      <span class="links">链接</span>
      <span class="cpu">32%<br />CPU使用</span>
      <div class="tray">
        <svg viewBox="0 0 18 18"><path d="M3 12l6-6 6 6" /></svg>
        <svg viewBox="0 0 18 18"><path d="M5.5 6.5h11v7h-11zM1 3h5M2 1v3M5 1v3M3.5 4v6h2" /><path d="M7 8h8v4H7z" fill="#fff" /></svg>
        <svg viewBox="0 0 18 18"><path d="M2 15Q2 4 15 3M5 15Q5 7 15 6M8 15q0-5 7-6M11 15q0-3 4-3" /></svg>
        <svg viewBox="0 0 18 18"><path d="M1 6.5h3l4-4v13l-4-4H1zM10 6q2 3 0 6M12 4q4 5 0 10M14 2q6 7 0 14" /></svg>
        <svg class="kb" viewBox="0 0 24 14"><path d="M.5 .5h23v12H.5zM5 10h14" /><path d="M3 4h18M3 7h18" stroke-dasharray="2 1" /></svg>
        <svg viewBox="0 0 18 18"><path d="M3.5 15L9 3l5.5 12M5.5 11h7" stroke-width="2" /></svg>
        <svg viewBox="0 0 18 18"><path d="M2 4l13-3 2 13-13 3z" fill="#f4511e" stroke="none" /><path d="M13 5q-7-1-7 1.5T9 9q4 0 4 2t-7 2" stroke-width="2" /></svg>
      </div>
      <time class="clock">11:00<br />2018/6/4</time>
      <button class="note" aria-label="通知"><svg viewBox="0 0 16 16"><path d="M.5 .5h15v11h-4v4l-4-4h-7z" fill="none" stroke="#fff" stroke-width="1.2" /></svg></button>
    </div>
  </div>
</template>

<style>
html,
body {
  margin: 0;
  overflow: hidden;
}
button,
input,
select {
  font: inherit;
  color: inherit;
  margin: 0;
  padding: 0;
  border: 0;
  background: none;
  border-radius: 0;
}
.song {
  font-family: 'Noto Sans CJK SC', sans-serif;
  font-feature-settings: 'hwid' 1;
}
.ico {
  width: 16px;
  height: 16px;
  flex: none;
  display: block;
}
.tool {
  display: flex;
  align-items: center;
  gap: 4px;
  flex: none;
  height: 22px;
  box-sizing: border-box;
  white-space: nowrap;
  text-align: left;
}
.tool.off {
  color: #7f7f7f;
}
.tool.on {
  border: 1px solid #0078d7;
  background: #e0ecf6;
  padding-left: 3px;
  gap: 3px;
}
.car {
  margin-left: 2px;
  display: block;
}
.car.tight {
  margin-left: -1px;
}
.car svg,
.combo svg {
  width: 7px;
  height: 4px;
  display: block;
}
.off .car {
  opacity: 0.6;
}
.sep {
  flex: none;
  height: 14px;
  width: 2px;
  background: linear-gradient(90deg, #b8b8b8 1px, transparent 1px);
}
.grip {
  flex: none;
  width: 6px;
  height: 16px;
  background: repeating-linear-gradient(#b8b8b8 0 2px, transparent 2px 4px);
  background-size: 2px 100%;
  background-repeat: no-repeat;
}
.more {
  align-self: flex-start;
  flex: none;
  font-size: 16px;
  line-height: 16px;
  text-align: left;
}
.combo {
  flex: none;
  display: flex;
  align-items: center;
  height: 22px;
  background: #fff;
  background-clip: content-box;
  padding-right: 2px;
  box-sizing: border-box;
}
.combo select {
  appearance: none;
  flex: 1;
  min-width: 0;
  padding-left: 2px;
  height: 22px;
}
.combo svg {
  margin-right: 3px;
}
</style>

<style scoped>
.screen {
  height: 100vh;
  display: flex;
  flex-direction: column;
  overflow: hidden;
  background: #f0f0f0;
  color: #000;
  font: 12px/16px 'Noto Sans', 'Noto Sans CJK SC', sans-serif;
}
ul {
  list-style: none;
  margin: 0;
  padding: 0;
}
.title {
  position: relative;
  display: flex;
  align-items: center;
  gap: 5px;
  height: 23px;
  flex: none;
  padding-left: 2px;
  background: #fff;
}
.title h1 {
  margin: 0;
  font: 12px/16px Inter, 'Noto Sans CJK SC', sans-serif;
  white-space: nowrap;
}
.winbtns {
  margin-left: auto;
  display: flex;
}
.winbtns button {
  width: 46px;
  height: 22px;
}
.winbtns svg {
  width: 10px;
  height: 10px;
  fill: none;
  stroke: #000;
}
.score {
  position: absolute;
  left: 1014px;
  top: -26px;
  width: 40px;
  height: 40px;
  border: 2px solid #b9c4bd;
  border-radius: 50%;
  background: #3cc35c;
  box-shadow: 0 2px 5px #0006, inset 0 -1px #187a66;
  color: #fff;
  font-weight: 700;
  line-height: 62px;
  text-align: center;
}
.menu {
  display: flex;
  align-items: center;
  height: 27px;
  flex: none;
  padding-left: 7px;
}
.blank {
  width: 25px;
  height: 24px;
  background: linear-gradient(90deg, #fbfbfb, #f0f0f0);
}
.account {
  display: flex;
  align-items: center;
  height: 24px;
  margin-left: auto;
  padding-left: 4px;
  background: linear-gradient(#fbfbfb, #f1f1f1);
}
.bar {
  display: flex;
  align-items: center;
  height: 28px;
  flex: none;
}
.grp {
  display: flex;
  align-items: center;
  height: 26px;
  padding: 0 4px;
  background: linear-gradient(#fdfdfd, #f1f1f1);
}
.main-bar {
  gap: 1px;
  padding: 1px 0 1px 2px;
}
.main-bar .grp:first-child {
  padding: 0 0 0 5px;
}
.main-bar .grp:nth-child(2) {
  padding: 0 0 0 5px;
}
.grow {
  flex: 1;
  min-width: 0;
}
.body {
  position: relative;
  flex: 1;
  min-height: 0;
  display: flex;
}
.side {
  width: 254px;
  flex: none;
  display: flex;
  flex-direction: column;
  padding: 1px 0;
  margin-right: 5px;
}
.side-head {
  display: flex;
  align-items: center;
  height: 17px;
  background: #0054e3;
  color: #fff;
  font-size: 13px;
  flex: none;
}
.side-head span {
  margin-right: auto;
}
.side-head button {
  display: flex;
  width: 18px;
}
.side-head svg {
  width: 9px;
  height: 9px;
  fill: none;
  stroke: #fff;
}
.tab {
  height: 22px;
  flex: none;
  border: 1px solid #a0a0a0;
  border-bottom-color: #888;
  box-shadow: inset 1px 1px #fff;
  background: #f0f0f0;
}
.panel {
  flex: 1;
  min-height: 0;
  display: flex;
  flex-direction: column;
  border: 2px solid #9a9a9a;
  border-width: 1px 2px 1px 1px;
}
.expand {
  height: 26px;
  flex: none;
  padding: 0 6px;
  display: flex;
  align-items: center;
  background: linear-gradient(#fff, #f0f0f0);
}
.expand svg {
  width: 40px;
  height: 16px;
}
.treebox {
  flex: 1;
  min-height: 0;
  display: flex;
  overflow: hidden;
  border: 1px solid #828790;
  background: #fff;
  padding: 1px;
}
.tree {
  flex: 1;
  min-width: 0;
}
.branch,
.leaf {
  display: flex;
  align-items: center;
  height: 16px;
  white-space: nowrap;
}
.branch span {
  margin-left: 5px;
}
.branch span + .ico {
  margin-left: 6px;
}
.twist {
  width: 23px;
  height: 16px;
}
.lines {
  width: 43px;
  height: 16px;
  fill: none;
  stroke: #808080;
  stroke-dasharray: 1 1;
}
.hit {
  display: flex;
  height: 16px;
  gap: 4px;
}
.sel .hit {
  background: #d9d9d9;
}
.new {
  font: italic 700 9px/8px 'Liberation Sans', sans-serif;
  background: #ffd800;
  margin: 0 0 6px 1px;
}
.vbar {
  width: 15px;
  flex: none;
  display: flex;
  flex-direction: column;
  background: #f0f0f0;
}
.vbar > svg,
.hbar > svg {
  width: 15px;
  height: 15px;
  flex: none;
  fill: none;
  stroke: #505050;
  stroke-width: 2;
}
.track {
  flex: 1;
  display: flex;
}
.vbar .track {
  flex-direction: column;
}
.thumb {
  background: #cdcdcd;
}
.treebox .thumb {
  height: 58%;
  margin: auto 0 10px;
}
.work {
  flex: 1;
  min-width: 0;
  display: flex;
  flex-direction: column;
  overflow: hidden;
}
.split {
  justify-content: space-between;
  padding-right: 43px;
}
.stub {
  width: 20px;
  margin-left: 2px;
}
.view {
  position: relative;
  flex: 1;
  min-height: 0;
  margin-top: 1px;
  background: #000;
  overflow: hidden;
}
.scene {
  display: block;
  width: 100%;
  height: 100%;
}
.axis-name {
  font: 17px 'Liberation Mono', monospace;
  fill: #d0d0d0;
  text-anchor: middle;
}
.dialog {
  position: absolute;
  left: 10px;
  top: 3px;
  width: 164px;
  height: 176px;
  display: flex;
  flex-direction: column;
  background: #fff;
  border: 1px solid #555;
  border-top-color: #fff;
}
.dialog h2 {
  margin: 0;
  padding: 7px 7px 8px;
  font-size: 12px;
  line-height: 16px;
  font-weight: 400;
  color: #999;
}
.opts {
  flex: 1;
  border: 1px solid #828790;
  border-bottom-width: 2px;
  padding: 0 3px;
}
.opts label {
  display: flex;
  align-items: center;
  gap: 4px;
  height: 12px;
  line-height: 12px;
}
.opts input,
.turn input {
  appearance: none;
  box-sizing: border-box;
  width: 11px;
  height: 11px;
  border: 1px solid #777;
  background: #fff;
}
.opts input:checked::after {
  content: '';
  display: block;
  width: 5px;
  height: 2px;
  margin: 2px 0 0 1px;
  border: solid #444;
  border-width: 0 0 1px 1px;
  transform: rotate(-45deg);
}
.snap {
  height: 30px;
  padding-left: 212px;
}
.snap .grp {
  height: 28px;
}
.snap .fields {
  padding: 0 4px 0 3px;
}
.fields label,
.unit {
  color: #808080;
  font-size: 13px;
}
.fields .offset {
  width: 60px;
}
.spin {
  display: flex;
  align-items: center;
  width: 58px;
  height: 22px;
  box-sizing: border-box;
  border: 1px solid #7a7a7a;
  margin: 0 2px 0 3px;
  padding-right: 4px;
  color: #808080;
}
.spin.wide {
  width: 68px;
}
.spin input {
  flex: 1;
  min-width: 0;
  width: 20px;
  text-align: right;
  padding-right: 8px;
}
.spin svg {
  width: 6px;
  height: 16px;
  fill: #707070;
}
.unit {
  margin-right: 4px;
}
.fields .turn {
  display: flex;
  align-items: center;
  gap: 7px;
  color: #000;
  font-size: 12px;
  margin: 0 2px 0 0;
}
.dock {
  display: flex;
  height: 203px;
  flex: none;
}
.dock-grip {
  width: 12px;
  flex: none;
  display: flex;
  flex-direction: column;
  padding: 4px 0 3px 1px;
  box-sizing: border-box;
}
.dock-grip button {
  display: flex;
  margin-bottom: 3px;
}
.dock-grip svg {
  width: 10px;
  height: 10px;
  fill: none;
  stroke: #633;
}
.dock-grip span {
  flex: 1;
  width: 7px;
  margin-left: 2px;
  background: radial-gradient(circle at 1px 1px, #b8b8b8 1px, transparent 1px);
  background-size: 4px 4px;
}
.dock-main {
  flex: 1;
  min-width: 0;
  display: flex;
  flex-direction: column;
  padding: 4px 1px 0 0;
}
.dock-bar {
  height: 26px;
  padding-left: 4px;
  background: linear-gradient(#fdfdfd, #f1f1f1);
}
.total {
  white-space: nowrap;
}
.sheet {
  flex: 1;
  min-height: 0;
  display: grid;
  grid-template: minmax(0, 1fr) 17px / minmax(0, 1fr) 16px;
  border: 1px solid #828790;
  background: #f0f0f0;
}
.clip {
  overflow: hidden;
}
table {
  table-layout: fixed;
  border-collapse: separate;
  border-spacing: 0;
  width: 1124px;
  line-height: 14px;
}
th,
td {
  box-sizing: border-box;
  height: 29px;
  padding: 0 0 0 2px;
  border-right: 1px solid #c0c0c0;
  border-bottom: 1px solid #c0c0c0;
  font-weight: 400;
  text-align: left;
  background: #ccffd9;
  white-space: nowrap;
  overflow: hidden;
}
tr.tall th,
tr.tall td {
  height: 31px;
}
thead th {
  height: 20px;
  padding: 0;
  text-align: center;
  background: linear-gradient(#fff, #ececec);
}
tbody th {
  padding: 0 8px 0 0;
  text-align: center;
  background: linear-gradient(90deg, #fff, #ececec);
}
thead th.hot {
  background: linear-gradient(#fbdc9c, #f4b95a);
  color: #5c0a3c;
}
.cur th {
  background: #ffd08a;
  color: #5c0a3c;
}
.cur .dia {
  background: #adead9;
}
td.dia {
  border-left: 1px solid #000;
  padding-left: 1px;
}
td:nth-child(2) {
  border-right: 0;
}
td.grade {
  padding: 0;
  text-align: center;
}
.grade svg {
  width: 9px;
  height: 9px;
  fill: none;
  stroke: #000;
}
td.shape {
  padding: 0;
}
.shape svg {
  display: block;
  width: 200px;
  height: 28px;
  fill: none;
  stroke: #000;
}
.tall .shape svg {
  height: 30px;
}
.shape text {
  stroke: none;
  fill: #000;
}
.shape text.len {
  fill: #f00;
}
.hbar {
  grid-column: 1 / 3;
  display: flex;
  align-items: center;
  background: #f0f0f0;
}
.hbar .track {
  height: 15px;
}
.hbar .thumb {
  width: 65%;
  margin-left: 2px;
}
.sheet .vbar .thumb {
  height: 28%;
  margin-top: 3px;
}
.ime {
  position: absolute;
  right: 0;
  top: 52px;
  width: 168px;
  height: 24px;
  display: flex;
  align-items: center;
  justify-content: space-between;
  padding: 0 4px 0 20px;
  border: solid #a9c8e6;
  border-width: 1px 0;
  background: #fff;
}
.ime svg {
  width: 16px;
  height: 16px;
}
.ime .sogou {
  position: absolute;
  left: -14px;
  top: -4px;
  width: 28px;
  height: 28px;
}
.status {
  display: flex;
  gap: 3px;
  height: 20px;
  padding: 2px 0 0;
  flex: none;
}
.status span {
  box-sizing: border-box;
  height: 19px;
  border: 1px solid #d0d0d0;
  border-left-color: #e4e4e4;
  line-height: 17px;
  padding-left: 1px;
  background: #f6f6f6;
  white-space: nowrap;
}
.s1 {
  width: 147px;
}
.s2 {
  width: 77px;
}
.s3 {
  width: 97px;
}
.s4 {
  width: 47px;
}
.s5 {
  flex: 1;
}
.s6 {
  width: 71px;
}
.taskbar {
  display: flex;
  align-items: stretch;
  height: 40px;
  flex: none;
  background: #010b0f;
  color: #fff;
  font-size: 12px;
}
.start {
  width: 48px;
  background: #000;
}
.start svg {
  width: 16px;
  height: 16px;
  display: block;
  margin: auto;
}
.search {
  width: 344px;
  box-sizing: border-box;
  display: flex;
  align-items: center;
  gap: 5px;
  padding: 0 14px 0 9px;
  background: #333;
}
.search svg {
  width: 22px;
  height: 22px;
}
.search input {
  flex: 1;
  font-size: 14px;
}
.search input::placeholder {
  color: #a0a0a0;
  opacity: 1;
}
.search .mic {
  width: 12px;
  height: 18px;
}
.apps {
  display: flex;
}
.apps button {
  width: 50px;
  display: flex;
  align-items: center;
  justify-content: center;
}
.apps svg {
  width: 24px;
  height: 24px;
}
.apps .wide {
  width: 52px;
}
.apps .run {
  width: 40px;
  margin: 0 4px;
  border-bottom: 2px solid #76b9ed;
  padding-top: 2px;
}
.apps .live {
  width: 48px;
  margin: 0;
  background: #33444a;
}
.links {
  align-self: center;
  margin-left: 13px;
}
.cpu,
.clock {
  text-align: center;
  line-height: 17px;
  padding-top: 3px;
}
.cpu {
  margin-left: 21px;
}
.tray {
  display: flex;
  align-items: center;
  gap: 7px;
  margin-left: auto;
  margin-right: 20px;
}
.tray svg {
  width: 18px;
  height: 18px;
  fill: none;
  stroke: #fff;
  stroke-width: 1.3;
}
.tray .kb {
  width: 24px;
  height: 14px;
}
.note {
  width: 64px;
}
.note svg {
  width: 16px;
  height: 16px;
  display: block;
  margin: auto;
}
</style>
